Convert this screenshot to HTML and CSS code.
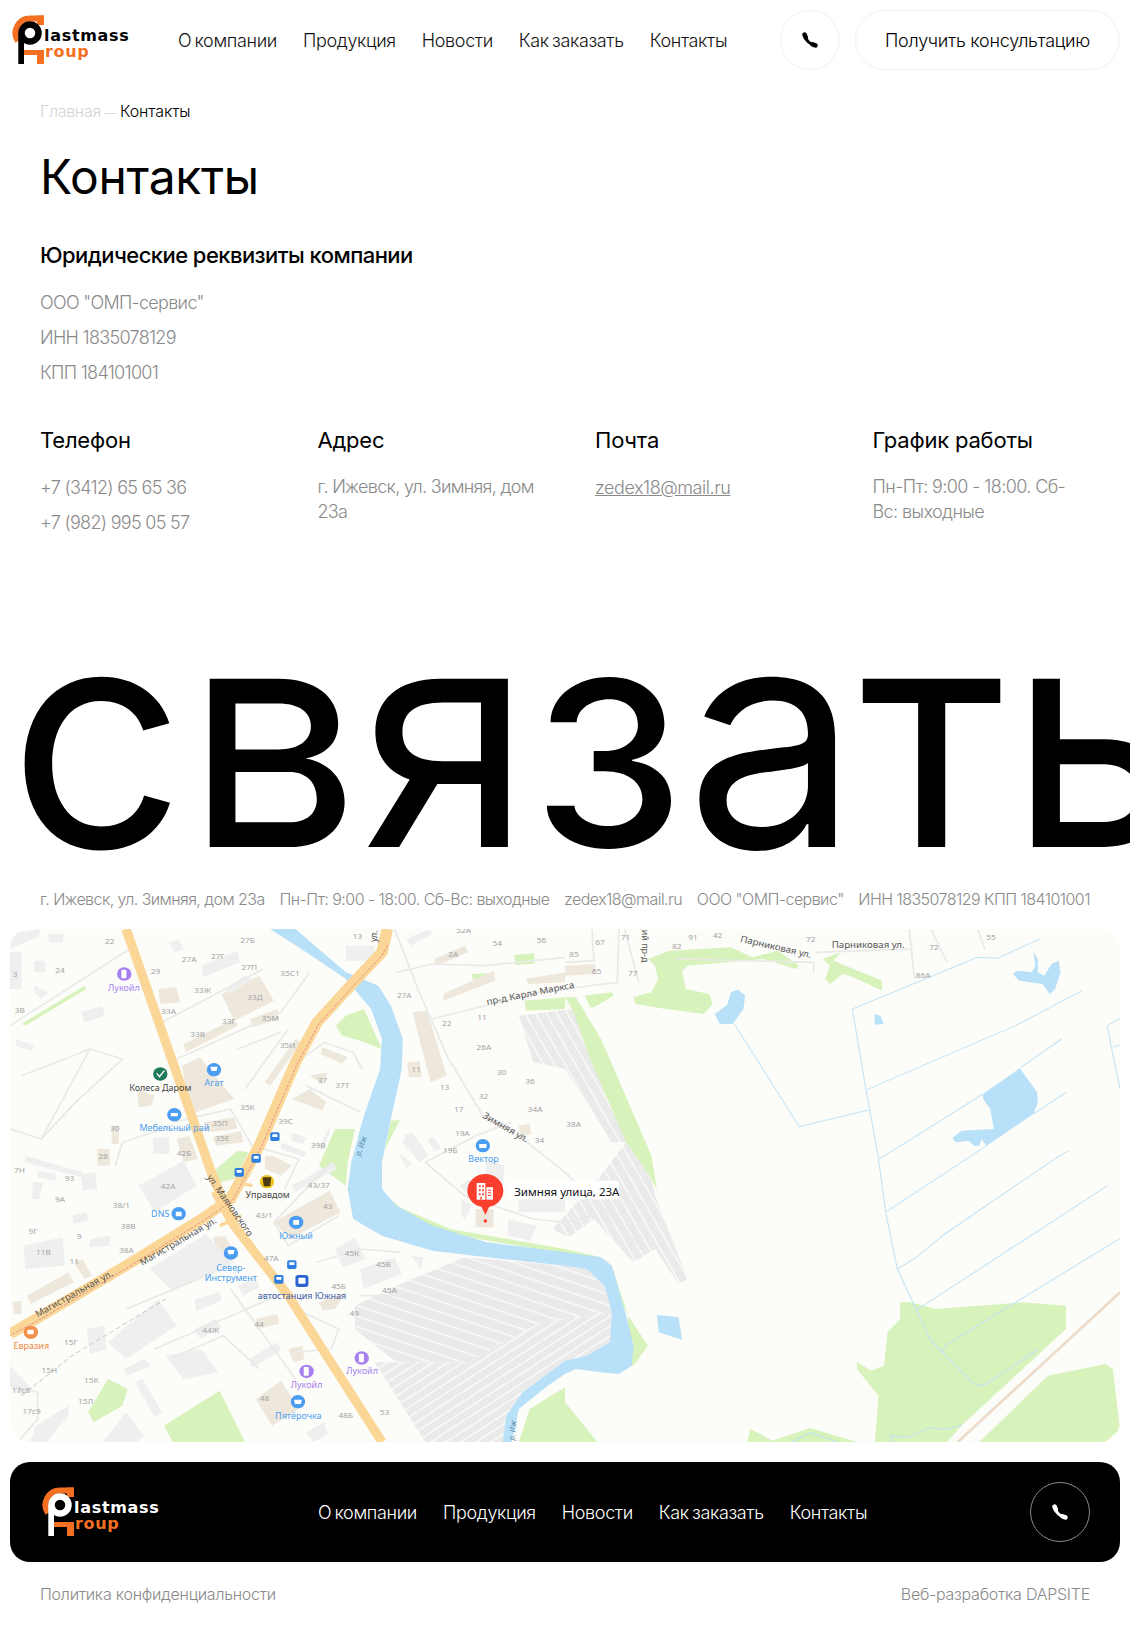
FILE: index.html
```html
<!DOCTYPE html>
<html lang="ru">
<head>
    <meta charset="UTF-8">
    <meta name="viewport" content="width=device-width, initial-scale=1.0">
    <title>Контакты</title>
    <link rel="stylesheet" href="styles.css">
</head>
<body>
    <header class="header">
        <svg class="logo" viewBox="0 0 120 52">
            <path class="logo-arc" d="M34 4.5H20A14.5 14.5 0 0 0 8 27.1"/>
            <rect class="logo-orange" x="27" y="1.5" width="7" height="9.5"/>
            <rect class="logo-orange" x="27" y="36" width="7" height="14"/>
            <rect class="logo-orange" x="14" y="36" width="14" height="5"/>
            <rect class="logo-main" x="8.3" y="19" width="5.7" height="31"/>
            <circle class="logo-ring" cx="20" cy="19" r="8.5"/>
            <text class="logo-text logo-main" x="34" y="27">lastmass</text>
            <text class="logo-text logo-orange" x="35" y="43">roup</text>
        </svg>
        <nav class="nav">
            <a href="#">О компании</a>
            <a href="#">Продукция</a>
            <a href="#">Новости</a>
            <a href="#">Как заказать</a>
            <a href="#">Контакты</a>
        </nav>
        <a class="round-btn" href="#">
            <svg class="phone" viewBox="0 0 16 16"><path class="phone-cord" d="M3 3.5C3.5 8 8 12.6 12.5 13"/><path class="phone-end" d="M2.6 2.6L3.7 5.4M10.5 12.3L13.4 13.4"/></svg>
        </a>
        <a class="pill-btn" href="#">Получить консультацию</a>
    </header>

    <main class="content">
        <div class="crumbs"><span class="crumb-muted">Главная <span class="crumb-dash">—</span> </span>Контакты</div>
        <h1>Контакты</h1>

        <h3 class="req-title">Юридические реквизиты компании</h3>
        <p class="line">ООО "ОМП-сервис"</p>
        <p class="line">ИНН 1835078129</p>
        <p class="line">КПП 184101001</p>

        <div class="cols">
            <div>
                <h3>Телефон</h3>
                <p class="line">+7 (3412) 65 65 36</p>
                <p class="line">+7 (982) 995 05 57</p>
            </div>
            <div>
                <h3>Адрес</h3>
                <p class="wrap wrap-tight">г. Ижевск, ул. Зимняя, дом 23а</p>
            </div>
            <div>
                <h3>Почта</h3>
                <p class="line"><a href="#">zedex18@mail.ru</a></p>
            </div>
            <div>
                <h3>График работы</h3>
                <p class="wrap">Пн-Пт: 9:00 - 18:00. Сб-Вс: выходные</p>
            </div>
        </div>
    </main>

    <div class="big-word">связаться</div>

    <div class="info-row">
        <span>г. Ижевск, ул. Зимняя, дом 23а</span>
        <span>Пн-Пт: 9:00 - 18:00. Сб-Вс: выходные</span>
        <span>zedex18@mail.ru</span>
        <span>ООО "ОМП-сервис"</span>
        <span>ИНН 1835078129 КПП 184101001</span>
    </div>

    <div class="map">
        <svg viewBox="28 0 3080 1539" preserveAspectRatio="none">
            <defs>
                <pattern id="lot" width="24" height="24" patternUnits="userSpaceOnUse" patternTransform="rotate(-35)">
                    <rect width="24" height="24" fill="#eaeaea"/>
                    <rect width="24" height="5" fill="#f8f8f6"/>
                </pattern>
                <pattern id="lot2" width="26" height="26" patternUnits="userSpaceOnUse" patternTransform="rotate(62)">
                    <rect width="26" height="26" fill="#eaeaea"/>
                    <rect width="26" height="5" fill="#f8f8f6"/>
                </pattern>
                <pattern id="lot3" width="30" height="30" patternUnits="userSpaceOnUse" patternTransform="rotate(20)">
                    <rect width="30" height="30" fill="#eaeaea"/>
                    <rect width="30" height="5" fill="#f8f8f6"/>
                </pattern>
            </defs>

            <rect class="m-bg" x="28" y="0" width="3080" height="1539"/>

            <!-- парковки -->
            <polygon fill="url(#lot3)" points="985,1130 1100,1070 1290,985 1568,1010 1628,1020 1678,1070 1698,1150 1500,1180 1300,1300 1100,1300 985,1200"/>
            <polygon fill="url(#lot)" points="1040,1300 1300,1300 1500,1180 1698,1150 1693,1240 1628,1280 1568,1295 1450,1390 1405,1460 1395,1539 1180,1539"/>
            <polygon fill="url(#lot2)" points="1440,260 1588,240 1758,640 1698,640 1568,420 1480,400"/>
            <polygon fill="url(#lot2)" points="1738,640 1808,750 1818,800 1908,1050 1883,1065 1818,960 1758,1000 1648,870 1578,925 1533,900 1653,760"/>

            <!-- зелень -->
            <g class="m-green">
                <polygon points="1110,573 1085,575 1060,700 1060,790 1110,835 1250,900 1568,960 1668,985 1698,1010 1743,1160 1798,1250 1758,1310 1733,1300 1743,1160 1673,1000 1568,975 1250,915 1100,850 1050,790 1050,700"/>
                <polygon points="885,710 930,600 985,600 965,700 960,770"/>
                <polygon points="932,290 960,260 1010,240 1060,360 1000,335 950,320"/>
                <polygon points="245,1450 300,1350 355,1380 340,1430 260,1480"/>
                <polygon points="455,1490 610,1385 680,1539 480,1539"/>
                <polygon points="1440,1539 1470,1440 1568,1375 1568,1420 1658,1539"/>
                <polygon points="1455,215 1568,205 1568,240 1460,245"/>
                <polygon points="1428,78 1482,72 1484,104 1430,108"/>
                <polygon points="1310,135 1350,132 1350,150 1312,153"/>
                <polygon points="1568,205 1598,205 1668,330 1808,680 1823,780 1808,750 1738,640 1638,390 1588,240"/>
                <polygon points="595,725 660,665 690,670 650,750 610,760"/>
                <polygon points="60,285 235,170 240,180 70,290"/>
                <g transform="translate(1568 0)">
                    <polygon points="230,90 290,65 460,55 520,85 590,65 650,110 640,120 550,90 340,110 325,125 335,180 400,195 410,225 385,255 280,240 195,225 190,205 240,190 258,150 250,110"/>
                    <polygon points="55,200 130,190 135,200 80,235 70,235"/>
                    <polygon points="715,90 765,70 745,95 880,155 880,185 800,145 770,135 735,165 722,150 735,110"/>
                    <polygon points="930,1120 960,1120 1030,1140 1270,1120 1390,1130 1390,1200 1100,1490 1060,1539 860,1539 870,1400 810,1320 810,1300 850,1325 885,1310 895,1210 930,1170"/>
                    <polygon points="1150,1539 1340,1340 1500,1305 1520,1320 1540,1500 1500,1539"/>
                    <polygon points="505,1539 515,1500 575,1535 680,1497 810,1539"/>
                </g>
            </g>

            <!-- вода -->
            <g class="m-water">
                <polygon points="750,0 820,0 960,130 1050,170 1085,230 1118,330 1115,420 1085,570 1060,700 1060,780 1100,830 1200,890 1350,940 1568,970 1668,985 1698,1010 1738,1160 1758,1250 1753,1310 1718,1335 1668,1330 1598,1320 1568,1335 1520,1370 1440,1440 1420,1539 1395,1539 1405,1460 1450,1390 1568,1295 1628,1280 1693,1240 1698,1150 1678,1070 1628,1020 1568,1010 1350,985 1200,965 1060,920 980,870 965,780 975,700 1010,560 1055,420 1060,330 1030,240 960,150 850,70"/>
                <g transform="translate(1568 0)">
                    <polygon points="415,255 450,228 460,190 480,182 500,200 495,240 465,285 430,285"/>
                    <polygon points="858,255 875,260 885,285 860,287"/>
                    <polygon points="1160,495 1262,418 1310,490 1312,520 1300,555 1170,650 1155,630 1150,650 1135,650 1120,635 1085,640 1075,628 1100,605 1190,600 1180,540 1160,510"/>
                    <polygon points="1300,70 1312,90 1312,130 1330,140 1350,105 1370,95 1375,130 1360,180 1345,195 1325,165 1260,155 1243,135 1255,125 1295,130 1305,110"/>
                    <polygon points="255,1158 315,1165 325,1232 260,1210"/>
                </g>
            </g>

            <!-- канавы -->
            <g class="m-ditch" transform="translate(1568 0)">
                <path d="M1320,28L1200,88L1145,85L797,240L835,480L870,690L890,850L922,1020L1015,1235L1130,1360Q1150,1375 1170,1365L1315,1260"/>
                <path d="M1435,185L1250,290L838,482"/>
                <path d="M1378,330L1265,415M1160,495L870,692"/>
                <path d="M1390,490L1300,555M1170,650L892,848"/>
                <path d="M1398,665L1365,685L1050,918L975,985L922,1020"/>
                <path d="M1505,770L1115,1045L972,1145"/>
                <path d="M1540,928L1055,1250L1045,1270"/>
                <path d="M470,285L650,593L842,543"/>
                <path d="M1540,268L1505,290L1515,350L1540,480M1520,355L1540,348"/>
                <path d="M905,1539L905,1520L950,1525L1010,1497L1060,1500L1100,1490M630,1539L680,1510L755,1539"/>
            </g>
            <path class="m-rail" d="M3108,1090L2658,1539"/>

            <!-- здания -->
            <g class="m-beige">
                <polygon points="615,195 720,140 760,215 650,275"/>
                <polygon points="505,410 555,385 650,510 530,555"/>
                <polygon points="760,880 915,785 945,850 805,930"/>
                <polygon points="440,180 490,175 500,220 445,225"/>
                <polygon points="510,345 650,270 660,290 515,370"/>
                <polygon points="695,270 770,240 775,270 700,295"/>
                <polygon points="735,460 820,330 835,340 750,470"/>
                <polygon points="895,355 965,385 950,405 890,375"/>
                <polygon points="860,440 910,430 895,465"/>
                <polygon points="810,510 860,480 905,520 895,545"/>
                <polygon points="565,580 650,565 660,600 575,610"/>
                <polygon points="590,625 670,605 675,640 600,650"/>
                <polygon points="490,630 525,620 550,690 510,700"/>
                <polygon points="380,480 430,500 420,530 385,535"/>
                <polygon points="270,660 305,660 305,710 270,710"/>
                <polygon points="310,590 330,590 330,645 310,645"/>
                <polygon points="1130,400 1165,395 1170,445 1135,445"/>
                <polygon points="1145,250 1185,245 1240,440 1195,460"/>
                <polygon points="1230,195 1370,125 1375,155 1230,215"/>
                <polygon points="1205,90 1290,50 1300,70 1210,110"/>
                <polygon points="1460,150 1568,130 1568,160 1465,165"/>
                <polygon points="735,680 760,680 810,710 780,740 735,720"/>
                <polygon points="75,1100 190,1030 205,1060 85,1125"/>
                <polygon points="35,1120 60,1115 60,1155 40,1155"/>
                <polygon points="885,1120 960,1090 930,1140 895,1145"/>
                <polygon points="800,1260 840,1250 845,1290 815,1300"/>
                <polygon points="710,1410 780,1355 830,1440 755,1490"/>
                <polygon points="710,1170 770,1155 775,1185 710,1200"/>
                <polygon points="1320,840 1370,840 1370,895 1320,895"/>
                <polygon points="590,925 625,920 660,985 620,1000"/>
                <polygon points="205,1000 230,990 255,1040 235,1050"/>
                <polygon points="1568,110 1653,105 1653,135 1568,140"/>
                <polygon points="1440,590 1470,585 1475,615 1445,620"/>
            </g>
            <g class="m-gray">
                <polygon points="560,110 660,65 665,100 565,145"/>
                <polygon points="385,770 510,695 545,770 430,850"/>
                <polygon points="65,950 175,925 180,1010 70,1020"/>
                <polygon points="415,1020 570,915 650,1000 480,1085"/>
                <polygon points="300,1240 440,1110 490,1190 350,1290"/>
                <polygon points="225,250 285,230 290,260 235,280"/>
                <polygon points="45,330 95,350 85,365 45,350"/>
                <polygon points="95,95 125,95 125,130 95,130"/>
                <polygon points="95,170 135,190 115,210 95,190"/>
                <polygon points="28,15 110,0 110,20 28,60"/>
                <polygon points="28,70 60,70 60,180 28,180"/>
                <polygon points="135,15 175,15 175,40 135,40"/>
                <polygon points="225,735 265,730 270,780 230,785"/>
                <polygon points="90,760 120,760 110,810 90,810"/>
                <polygon points="105,725 155,735 155,755 105,745"/>
                <polygon points="425,625 470,625 470,675 425,675"/>
                <polygon points="250,930 305,920 305,950 250,955"/>
                <polygon points="70,680 230,730 225,745 70,700"/>
                <polygon points="810,770 925,700 935,720 820,790"/>
                <polygon points="810,610 850,625 840,645 810,635"/>
                <polygon points="780,640 850,670 845,685 780,660"/>
                <polygon points="885,660 915,590 915,610 895,665"/>
                <polygon points="930,960 985,925 1015,990 950,1015"/>
                <polygon points="1000,1020 1095,985 1115,1035 1010,1080"/>
                <polygon points="1140,980 1175,985 1170,1020"/>
                <polygon points="1115,640 1145,610 1190,680 1165,700"/>
                <polygon points="1185,630 1205,625 1225,660 1205,665"/>
                <polygon points="1105,670 1140,700 1130,720"/>
                <polygon points="540,1110 610,1090 615,1115 545,1145"/>
                <polygon points="1275,770 1300,750 1320,780 1300,800"/>
                <polygon points="1280,810 1310,830 1290,870 1280,860"/>
                <polygon points="1410,870 1490,890 1470,935 1410,920"/>
                <polygon points="1440,810 1568,800 1568,850 1440,850"/>
                <polygon points="460,1280 560,1260 605,1330 510,1350"/>
                <polygon points="345,1320 400,1290 420,1310 350,1340"/>
                <polygon points="375,1360 395,1350 450,1450 430,1465"/>
                <polygon points="28,1310 90,1380 60,1400 28,1370"/>
                <polygon points="100,1490 190,1430 190,1460 130,1539 85,1539"/>
                <polygon points="285,1539 350,1450 400,1520 380,1539"/>
                <polygon points="1350,690 1400,710 1395,770 1345,750"/>
                <polygon points="1120,620 1135,610 1160,650 1140,665"/>
                <polygon points="680,140 700,150 640,195 625,180"/>
                <polygon points="960,50 1040,50 1040,95 960,95"/>
                <polygon points="1130,30 1190,0 1200,15 1140,50"/>
                <polygon points="470,40 495,30 510,60 485,70"/>
                <polygon points="200,860 240,850 245,875 205,885"/>
                <polygon points="240,1200 290,1190 295,1260 250,1275"/>
                <polygon points="540,1200 600,1170 615,1195 555,1230"/>
                <polygon points="660,1070 710,1045 720,1075 675,1100"/>
                <polygon points="690,1290 770,1240 780,1265 700,1315"/>
                <polygon points="850,1510 900,1480 910,1515 870,1539"/>
            </g>

            <!-- улицы -->
            <g class="m-street">
                <path d="M28,290L360,60"/>
                <path d="M1095,0L1160,180L1240,380L1340,560L1440,620L1568,730L1658,820L1783,960"/>
                <path d="M1200,270L1568,170"/>
                <path d="M1100,130L1200,105L1350,110L1568,85"/>
                <path d="M490,390L780,250L860,130"/>
                <path d="M450,280L730,120"/>
                <path d="M660,360L780,310"/>
                <path d="M680,480L800,300"/>
                <path d="M850,380L900,340L980,370L1005,420"/>
                <path d="M850,470L1000,550"/>
                <path d="M480,580L640,540L700,650L830,690L790,780"/>
                <path d="M320,710L340,640L480,590"/>
                <path d="M115,630L250,360L340,390L210,520L115,630L28,600"/>
                <path d="M60,440L250,360"/>
                <path d="M760,880L920,700M760,880L800,950L940,860"/>
                <path d="M880,1000L1000,960L1110,970M1000,1100L1170,1100"/>
                <path d="M640,1080L820,1350"/>
                <path d="M350,1140L640,1010M430,1260L790,1090"/>
                <path d="M470,1290L620,1220L720,1320M840,1150L940,1200L920,1260L810,1270"/>
                <path d="M28,1370L105,1390L105,1470L50,1539"/>
                <path d="M1180,700L1320,620L1420,580M1180,700L1290,800L1480,870L1568,880L1640,860"/>
                <path d="M1568,100L1648,95L1643,0M1568,180L1713,160L1718,0"/>
                <path d="M1773,160L1733,0M1873,90L2258,100L2258,130M2263,70L2533,60M2523,0L2538,150M2583,0L2628,100M2713,0L2733,60"/>
            </g>

            <!-- дороги -->
            <g class="m-road">
                <path d="M350,0L590,740L650,890L800,1100L1060,1539"/>
                <path d="M1075,0L1060,70L990,150L880,280L820,400L720,650L640,810L560,870L350,1010L100,1170L28,1215"/>
                <path class="m-road-thin" d="M590,790L640,890M610,890L670,860M650,760L700,770"/>
            </g>
            <path class="m-tram" d="M1075,50L1060,80L990,160L885,285L825,405L725,655L645,815L565,875L355,1015L105,1175L28,1220"/>
            <path class="m-rail-dash" d="M60,1400L200,1280L460,1110"/>

            <!-- номера домов -->
            <g class="m-num">
                <text x="305" y="45">22</text><text x="992" y="30">13</text><text x="687" y="41">27Б</text><text x="525" y="98">27А</text><text x="605" y="90">27Г</text><text x="692" y="122">27П</text><text x="805" y="142">35С1</text><text x="432" y="136">29</text><text x="562" y="193">33Ж</text><text x="708" y="213">33Д</text><text x="468" y="256">33А</text><text x="635" y="285">33Г</text><text x="750" y="276">35М</text><text x="549" y="324">33В</text><text x="798" y="358">35И</text><text x="167" y="133">24</text><text x="42" y="143">3</text><text x="55" y="253">3В</text><text x="895" y="461">37</text><text x="950" y="478">37Т</text><text x="687" y="543">35К</text><text x="793" y="585">39С</text><text x="611" y="591">35П</text><text x="617" y="636">35Е</text><text x="883" y="658">39В</text><text x="511" y="680">42Б</text><text x="319" y="605">30</text><text x="287" y="689">28</text><text x="54" y="733">7Н</text><text x="193" y="755">93</text><text x="467" y="780">42А</text><text x="885" y="776">43/37</text><text x="337" y="836">38/1</text><text x="167" y="820">9А</text><text x="733" y="866">43/1</text><text x="910" y="841">43</text><text x="356" y="901">38В</text><text x="92" y="916">9Г</text><text x="220" y="931">9</text><text x="121" y="978">11В</text><text x="351" y="972">38А</text><text x="206" y="1006">11</text><text x="753" y="996">47А</text><text x="977" y="980">45К</text><text x="1064" y="1013">45В</text><text x="940" y="1080">45Б</text><text x="1081" y="1091">45А</text><text x="983" y="1160">49</text><text x="719" y="1195">44</text><text x="585" y="1212">44Ж</text><text x="197" y="1248">15Г</text><text x="137" y="1332">15Н</text><text x="254" y="1361">15К</text><text x="238" y="1424">15Л</text><text x="58" y="1393">17с8</text><text x="88" y="1456">17с9</text><text x="734" y="1417">48</text><text x="960" y="1466">48Б</text><text x="1067" y="1459">53</text><text x="1380" y="51">54</text><text x="1503" y="41">56</text><text x="1287" y="13">52А</text><text x="1258" y="85">2А</text><text x="1122" y="206">27А</text><text x="1240" y="292">22</text><text x="1338" y="274">11</text><text x="1343" y="363">26А</text><text x="1155" y="428">11</text><text x="1234" y="482">13</text><text x="1392" y="439">30</text><text x="1471" y="466">36</text><text x="1342" y="509">32</text><text x="1273" y="548">17</text><text x="1485" y="548">34А</text><text x="1283" y="620">19А</text><text x="1250" y="672">19Б</text><text x="1497" y="641">34</text>
                <g transform="translate(1568 0)">
                    <text x="97" y="48">67</text><text x="168" y="33">71</text><text x="25" y="83">85</text><text x="88" y="135">65</text><text x="188" y="140">77</text><text x="310" y="60">82</text><text x="355" y="33">91</text><text x="424" y="28">42</text><text x="682" y="40">72</text><text x="1024" y="63">72</text><text x="1182" y="33">55</text><text x="994" y="146">86А</text><text x="24" y="593">38А</text>
                </g>
            </g>

            <!-- названия улиц -->
            <g class="m-street-name">
                <text transform="translate(573 745) rotate(57)">ул. Маяковского</text>
                <text transform="translate(105 1165) rotate(-31)">Магистральная ул.</text>
                <text transform="translate(395 1010) rotate(-32)">Магистральная ул.</text>
                <text transform="translate(1352 228) rotate(-12)">пр-д Карла Маркса</text>
                <text transform="translate(1338 565) rotate(32)">Зимняя ул.</text>
                <text transform="translate(1045 40) rotate(-85)">ул.</text>
                <text transform="translate(2053 38) rotate(14)">Парниковая ул.</text>
                <text x="2308" y="58">Парниковая ул.</text>
                <text transform="translate(1783 2) rotate(90)">ий пр-д</text>
            </g>
            <text class="m-river" transform="translate(1000 682) rotate(-72)">р. Иж</text>
            <text class="m-river" transform="translate(1428 1535) rotate(-85)">р. Иж</text>

            <!-- значки -->
            <g class="m-poi-purple"><circle cx="345" cy="135" r="20"/><circle cx="851" cy="1327" r="20"/><circle cx="1004" cy="1287" r="20"/></g>
            <g class="m-poi-blue"><circle cx="594" cy="422" r="20"/><circle cx="484" cy="557" r="20"/><circle cx="496" cy="854" r="20"/><circle cx="822" cy="880" r="20"/><circle cx="641" cy="972" r="20"/><circle cx="1340" cy="650" r="20"/><circle cx="827" cy="1418" r="20"/></g>
            <g class="m-poi-glyph">
                <rect x="337" y="122" width="14" height="26" rx="3"/><rect x="843" y="1314" width="14" height="26" rx="3"/><rect x="996" y="1274" width="14" height="26" rx="3"/>
                <path d="M584 413h20l-3 13h-14zM488 848h16v14h-16zM814 873h16v14h-16zM631 963h20l-3 13h-14zM474 552h20v10h-20zM1330 645h20v12h-20zM816 1412h22l-3 13h-16z"/>
            </g>
            <circle class="m-poi-green" cx="445" cy="435" r="20"/>
            <path class="m-check" d="M435 433L443 443L456 425"/>
            <circle class="m-poi-yellow" cx="741" cy="758" r="20"/>
            <path class="m-yellow-mark" d="M729 745L753 745L750 772L732 772Z"/>
            <circle class="m-poi-orange" cx="86" cy="1210" r="20"/>
            <rect class="m-poi-glyph" x="76" y="1202" width="18" height="14" rx="3"/>
            <g class="m-transit">
                <rect x="750" y="610" width="26" height="26" rx="5"/><rect x="698" y="675" width="26" height="26" rx="5"/><rect x="651" y="717" width="26" height="26" rx="5"/><rect x="797" y="994" width="26" height="26" rx="5"/><rect x="761" y="1038" width="26" height="26" rx="5"/>
            </g>
            <g class="m-transit-glyph">
                <path d="M756 616h14v8h-14zM704 681h14v8h-14zM657 723h14v8h-14zM803 1000h14v8h-14zM767 1044h14v8h-14z"/>
            </g>
            <rect class="m-bus" x="820" y="1038" width="36" height="36" rx="8"/>
            <rect class="m-poi-glyph" x="828" y="1046" width="20" height="18" rx="3"/>

            <!-- подписи -->
            <g class="m-lbl m-lbl-purple"><text x="344" y="185">Лукойл</text><text x="851" y="1378">Лукойл</text><text x="1005" y="1336">Лукойл</text></g>
            <g class="m-lbl m-lbl-blue"><text x="594" y="471">Агат</text><text x="484" y="606">Мебельный рай</text><text x="445" y="865">DNS</text><text x="822" y="929">Южный</text><text x="641" y="1025">Север-</text><text x="641" y="1055">Инструмент</text><text x="1342" y="700">Вектор</text><text x="828" y="1469">Пятёрочка</text></g>
            <g class="m-lbl m-lbl-dark"><text x="445" y="485">Колеса Даром</text><text x="743" y="807">Управдом</text></g>
            <text class="m-lbl m-lbl-orange" x="87" y="1260">Евразия</text>
            <text class="m-lbl m-lbl-navy" x="838" y="1110">автостанция Южная</text>

            <!-- метка -->
            <rect class="m-tag" x="1410" y="755" width="308" height="56" rx="8"/>
            <text class="m-tag-text" x="1427" y="800">Зимняя улица, 23А</text>
            <circle class="m-pin" cx="1347" cy="785" r="50"/>
            <path class="m-pin" d="M1335 830L1347 858L1359 830Z"/>
            <circle class="m-pin" cx="1347" cy="876" r="5"/>
            <path class="m-pin-icon" d="M1323 762h24v50h-24zM1350 775h18v37h-18z"/>
            <path class="m-pin" d="M1329 769h5v6h-5zM1338 769h5v6h-5zM1329 781h5v6h-5zM1338 781h5v6h-5zM1329 793h5v6h-5zM1338 793h5v6h-5zM1333 803h4v9h-4zM1354 782h9v3h-9zM1354 790h9v3h-9zM1354 798h9v3h-9z"/>
        </svg>
    </div>

    <footer class="footer">
        <svg class="logo" viewBox="0 0 120 52">
            <path class="logo-arc" d="M34 4.5H20A14.5 14.5 0 0 0 8 27.1"/>
            <rect class="logo-orange" x="27" y="1.5" width="7" height="9.5"/>
            <rect class="logo-orange" x="27" y="36" width="7" height="14"/>
            <rect class="logo-orange" x="14" y="36" width="14" height="5"/>
            <rect class="logo-main" x="8.3" y="19" width="5.7" height="31"/>
            <circle class="logo-ring" cx="20" cy="19" r="8.5"/>
            <text class="logo-text logo-main" x="34" y="27">lastmass</text>
            <text class="logo-text logo-orange" x="35" y="43">roup</text>
        </svg>
        <nav class="nav footer-nav">
            <a href="#">О компании</a>
            <a href="#">Продукция</a>
            <a href="#">Новости</a>
            <a href="#">Как заказать</a>
            <a href="#">Контакты</a>
        </nav>
        <a class="round-btn footer-btn" href="#">
            <svg class="phone" viewBox="0 0 16 16"><path class="phone-cord" d="M3 3.5C3.5 8 8 12.6 12.5 13"/><path class="phone-end" d="M2.6 2.6L3.7 5.4M10.5 12.3L13.4 13.4"/></svg>
        </a>
    </footer>

    <div class="bottom">
        <span>Политика конфиденциальности</span>
        <span>Веб-разработка DAPSITE</span>
    </div>
</body>
</html>
```

FILE: styles.css
```css
* {
    box-sizing: border-box;
}

body {
    margin: 0;
    font-family: Inter, "Noto Sans", sans-serif;
    font-weight: 300;
    color: #000;
    background-color: #fff;
    overflow-x: hidden;
}

a {
    color: inherit;
    text-decoration: none;
}

/* Header */
.header {
    display: flex;
    align-items: center;
    padding: 10px;
    height: 80px;
}

.logo {
    display: block;
    width: 120px;
    height: 52px;
    flex: none;
    color: #000;
    margin-top: -1px;
}

.logo-arc {
    fill: none;
    stroke: #f36f21;
    stroke-width: 6;
}

.logo-orange {
    fill: #f36f21;
}

.logo-main {
    fill: currentColor;
}

.logo-ring {
    fill: none;
    stroke: currentColor;
    stroke-width: 6.5;
}

.logo-text {
    font-family: "DejaVu Sans", sans-serif;
    font-weight: 700;
    font-size: 16px;
    letter-spacing: 0.7px;
}

.nav {
    display: flex;
    gap: 26px;
    font-size: 18px;
    letter-spacing: -0.35px;
    word-spacing: -1.5px;
    margin-left: 48px;
    color: #111;
}

.round-btn {
    display: flex;
    align-items: center;
    justify-content: center;
    width: 60px;
    height: 60px;
    border: 1px solid #f1f1f1;
    border-radius: 50%;
    margin-left: auto;
    flex: none;
}

.pill-btn {
    display: flex;
    align-items: center;
    justify-content: center;
    width: 265px;
    height: 60px;
    margin-left: 15px;
    border: 1px solid #f1f1f1;
    border-radius: 30px;
    font-size: 18px;
    letter-spacing: -0.25px;
    flex: none;
}

.phone {
    width: 16px;
    height: 16px;
    color: #000;
}

.phone-cord {
    fill: none;
    stroke: currentColor;
    stroke-width: 3;
}

.phone-end {
    fill: none;
    stroke: currentColor;
    stroke-width: 4.6;
    stroke-linecap: round;
}

/* Content */
.content {
    padding: 0 40px;
}

.crumbs {
    font-size: 16px;
    line-height: 22px;
    height: 22px;
    margin-top: 20px;
    letter-spacing: -0.1px;
    word-spacing: -0.5px;
}

.crumb-muted {
    color: #d4d4d4;
    letter-spacing: -0.3px;
}

.crumb-dash {
    font-size: 12px;
}

h1 {
    font-size: 48px;
    font-weight: 400;
    line-height: 58px;
    letter-spacing: -0.3px;
    margin: 26px 0 0;
}

h3 {
    font-size: 22px;
    font-weight: 400;
    line-height: 28px;
    letter-spacing: -0.2px;
    margin: 0;
}

.req-title {
    margin: 35px 0 16px;
    font-weight: 500;
    letter-spacing: -0.55px;
}

.line {
    margin: 0;
    font-size: 18px;
    line-height: 35px;
    letter-spacing: -0.7px;
    color: #8a8a8a;
}

.line a {
    text-decoration: underline;
    letter-spacing: -0.45px;
}

.wrap {
    margin: 0;
    padding-top: 4px;
    font-size: 18px;
    line-height: 25px;
    letter-spacing: -0.6px;
    color: #8a8a8a;
}

.wrap-tight {
    letter-spacing: -0.7px;
}

.cols {
    display: grid;
    grid-template-columns: repeat(4, 1fr);
    column-gap: 60px;
    margin-top: 36px;
}

.cols h3 {
    margin-bottom: 16px;
}

/* Big word */
.big-word {
    font-family: Inter, sans-serif;
    font-size: 308px;
    font-weight: 400;
    line-height: 306px;
    letter-spacing: 1px;
    white-space: nowrap;
    margin: 42px 0 0 9px;
    overflow: hidden;
    width: 1121px;
}

.info-row {
    display: flex;
    justify-content: space-between;
    padding: 0 40px;
    font-size: 16px;
    line-height: 22px;
    letter-spacing: -0.55px;
    white-space: nowrap;
    color: #8a8a8a;
}

/* Map */
.map {
    margin: 19px 10px 0;
    height: 513px;
    border-radius: 20px;
    overflow: hidden;
}

.map svg {
    display: block;
    width: 100%;
    height: 100%;
}

.m-bg { fill: #fcfcf9; }
.m-green { fill: #d8f2bb; }
.m-water { fill: #b8e0f8; }
.m-ditch { fill: none; stroke: #c2e3f5; stroke-width: 3; }
.m-rail { fill: none; stroke: #ecdccb; stroke-width: 8; }
.m-beige { fill: #eee8dc; }
.m-gray { fill: #efefef; }
.m-street { fill: none; stroke: #e9e9e7; stroke-width: 5; }
.m-road { fill: none; stroke: #fad797; stroke-width: 26; }
.m-road path:nth-child(2) { stroke-width: 32; }
.m-road .m-road-thin { stroke-width: 10; }
.m-tram { fill: none; stroke: #d8708a; stroke-width: 2; stroke-dasharray: 8 4; }
.m-rail-dash { fill: none; stroke: #cfcfcf; stroke-width: 3; stroke-dasharray: 14 8; }

.m-num {
    font-family: "Noto Sans", sans-serif;
    font-size: 23px;
    font-weight: 400;
    fill: #a3a3a3;
    text-anchor: middle;
}

.m-street-name {
    font-family: "Noto Sans", sans-serif;
    font-size: 27px;
    font-weight: 400;
    fill: #555;
}

.m-river {
    font-family: "Noto Sans", sans-serif;
    font-size: 23px;
    font-style: italic;
    font-weight: 400;
    fill: #5c8fb3;
}

.m-poi-purple { fill: #a781f0; }
.m-poi-blue { fill: #4a9df0; }
.m-poi-green { fill: #1f7a5c; }
.m-poi-yellow { fill: #f0c419; }
.m-poi-orange { fill: #f2914d; }
.m-poi-glyph { fill: #fff; }
.m-check { fill: none; stroke: #fff; stroke-width: 4; }
.m-yellow-mark { fill: #4a3a12; }
.m-transit { fill: #2f7fe0; }
.m-transit-glyph { fill: #fff; }
.m-bus { fill: #2a64d0; }

.m-lbl {
    font-family: "Noto Sans", sans-serif;
    font-size: 25px;
    font-weight: 400;
    text-anchor: middle;
}

.m-lbl-purple { fill: #a781f0; }
.m-lbl-blue { fill: #4a9df0; }
.m-lbl-dark { fill: #444; }
.m-lbl-orange { fill: #ea8a45; }
.m-lbl-navy { fill: #3c5aa6; }

.m-tag { fill: #fff; }

.m-tag-text {
    font-family: "Noto Sans", sans-serif;
    font-size: 32px;
    font-weight: 400;
    fill: #111;
}

.m-pin { fill: #fb3f2e; }
.m-pin-icon { fill: #fff; }

/* Footer */
.footer {
    display: flex;
    align-items: center;
    height: 100px;
    margin: 20px 10px 0;
    padding: 0 30px;
    background-color: #000;
    color: #fff;
    border-radius: 20px;
}

.footer .logo {
    color: #fff;
    margin-top: 0;
}

.footer-nav {
    margin-left: 158px;
    color: #fff;
}

.footer-btn {
    border-color: #8a8a8a;
}

.footer-btn .phone {
    color: #fff;
}

.bottom {
    display: flex;
    justify-content: space-between;
    padding: 0 40px;
    margin-top: 21px;
    font-size: 16px;
    line-height: 22px;
    letter-spacing: -0.25px;
    color: #8a8a8a;
}
```
